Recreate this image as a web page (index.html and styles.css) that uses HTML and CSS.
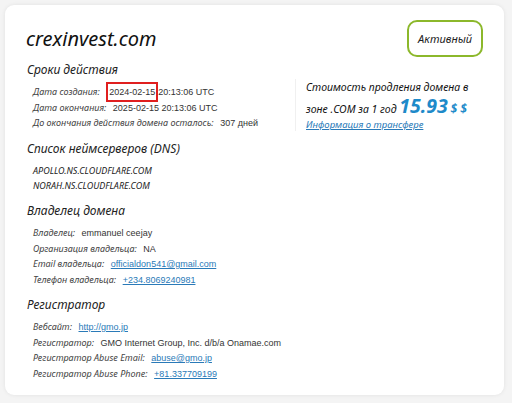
FILE: index.html
```html
<!DOCTYPE html>
<html lang="ru">
<head>
    <meta charset="UTF-8">
    <title>crexinvest.com</title>
    <link rel="stylesheet" href="styles.css">
</head>
<body>

<div class="card">
    <div class="card-head">
        <h1>crexinvest.com</h1>
        <span class="status">Активный</span>
    </div>

    <!-- Сроки + цена -->
    <div class="top-row">
        <div class="section">
            <h2>Сроки действия</h2>
            <div class="row"><span class="label">Дата создания:</span> <span class="value"><span class="mark">2024-02-15</span>20:13:06 UTC</span></div>
            <div class="row"><span class="label">Дата окончания:</span> <span class="value">2025-02-15 20:13:06 UTC</span></div>
            <div class="row"><span class="label">До окончания действия домена осталось:</span> <span class="value">307 дней</span></div>
        </div>
        <div class="price">
            <p>Стоимость продления домена в</p>
            <p class="sum-line">зоне .COM за 1 год <span class="sum">15.93</span> <span class="cur">$ $</span></p>
            <a href="#" class="transfer">Информация о трансфере</a>
        </div>
    </div>

    <div class="section">
        <h2>Список неймсерверов (DNS)</h2>
        <div class="row ns">APOLLO.NS.CLOUDFLARE.COM</div>
        <div class="row ns">NORAH.NS.CLOUDFLARE.COM</div>
    </div>

    <div class="section">
        <h2>Владелец домена</h2>
        <div class="row"><span class="label">Владелец:</span> <span class="value">emmanuel ceejay</span></div>
        <div class="row"><span class="label">Организация владельца:</span> <span class="value">NA</span></div>
        <div class="row"><span class="label">Email владельца:</span> <a href="#" class="value">officialdon541@gmail.com</a></div>
        <div class="row"><span class="label">Телефон владельца:</span> <a href="#" class="value">+234.8069240981</a></div>
    </div>

    <div class="section">
        <h2>Регистратор</h2>
        <div class="row"><span class="label">Вебсайт:</span> <a href="#" class="value">http://gmo.jp</a></div>
        <div class="row"><span class="label">Регистратор:</span> <span class="value">GMO Internet Group, Inc. d/b/a Onamae.com</span></div>
        <div class="row"><span class="label">Регистратор Abuse Email:</span> <a href="#" class="value">abuse@gmo.jp</a></div>
        <div class="row"><span class="label">Регистратор Abuse Phone:</span> <a href="#" class="value">+81.337709199</a></div>
    </div>
</div>

</body>
</html>
```

FILE: styles.css
```css
* {
    box-sizing: border-box;
}

body {
    margin: 0;
    padding: 5px 8px 8px 5px;
    background-color: #f4f4f4;
    font-family: "Liberation Sans", Arial, sans-serif;
    color: #333;
}

.card {
    background-color: white;
    border-radius: 9px;
    box-shadow: 0 0 4px rgba(0, 0, 0, 0.08);
    padding: 15px 21px 14px 22px;
    height: 390px;
}

.card-head {
    display: flex;
    justify-content: space-between;
    align-items: center;
}

h1 {
    font-family: "Noto Sans", sans-serif;
    font-style: italic;
    font-weight: normal;
    font-size: 20px;
    color: #111;
    margin: 0 0 0 -1px;
}

.status {
    border: 2px solid #8cb82b;
    border-radius: 10px;
    padding: 9px 9px;
    font-family: "Noto Sans", sans-serif;
    font-style: italic;
    font-size: 11px;
    color: #222;
}

h2 {
    font-family: "Noto Sans", sans-serif;
    font-style: italic;
    font-weight: normal;
    font-size: 12px;
    line-height: 16px;
    color: #222;
    margin: 0 0 6px 0;
}

.section {
    margin-top: 10px;
}

.top-row {
    display: flex;
    justify-content: space-between;
}

.top-row .section {
    margin-top: 5px;
}

.row {
    font-size: 9px;
    line-height: 15px;
    height: 15.5px;
    padding-left: 6px;
    white-space: nowrap;
}

.label {
    font-family: "Noto Sans", sans-serif;
    font-style: italic;
    color: #444;
    margin-right: 4px;
}

.value {
    color: #333;
}

a.value {
    color: #2a7ab8;
}

.mark {
    border: 2px solid #e01f1f;
    padding: 3px 1px;
}

.ns {
    font-family: "Noto Sans", sans-serif;
    font-style: italic;
    color: #222;
    height: 15px;
}

.price {
    border-left: 1px solid #f0f0f0;
    padding: 0 0 0 10px;
    width: 188px;
    margin-top: 22px;
    height: 52px;
}

.price p {
    margin: 0;
    font-family: "Noto Sans", sans-serif;
    font-style: italic;
    font-size: 10.5px;
    color: #111;
    line-height: 17px;
}

.price .sum-line {
    line-height: 18px;
    margin-top: 1px;
}

.sum {
    font-size: 19.5px;
    line-height: 18px;
    font-weight: bold;
    color: #1e8ac9;
}

.cur {
    font-size: 12px;
    font-weight: bold;
    color: #1e8ac9;
}

.transfer {
    display: block;
    font-family: "Noto Sans", sans-serif;
    font-style: italic;
    font-size: 9.5px;
    line-height: 13px;
    color: #2a7ab8;
}
```
